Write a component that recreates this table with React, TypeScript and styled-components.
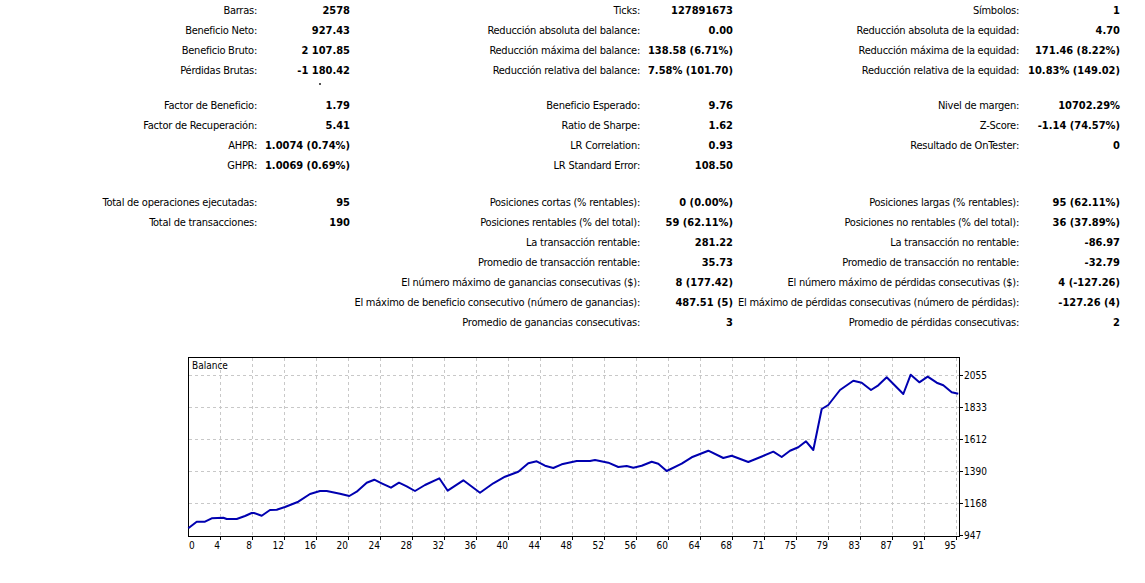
import React from "react";
import styled, { createGlobalStyle } from "styled-components";

const GlobalStyle = createGlobalStyle`
  html, body { margin: 0; padding: 0; background: #ffffff; }
  body {
    font-family: Tahoma, "DejaVu Sans Condensed", "DejaVu Sans", sans-serif;
    font-size: 11px;
    color: #000000;
  }
`;

const Page = styled.div`
  width: 1145px;
  height: 583px;
  overflow: hidden;
  background: #ffffff;
`;

const StatsGrid = styled.div`
  display: grid;
  grid-template-columns: 264px 86px 298px 85px 294px 93px;
  grid-auto-rows: auto;
`;

const Label = styled.div<{ $pad: number }>`
  display: flex;
  align-items: center;
  justify-content: flex-end;
  height: 20px;
  white-space: nowrap;
  padding-right: ${(p) => p.$pad}px;
  font-stretch: condensed;
  letter-spacing: -0.25px;
  color: #000;
`;

const Value = styled.div`
  display: flex;
  align-items: center;
  justify-content: flex-end;
  height: 20px;
  white-space: nowrap;
  font-weight: bold;
  font-stretch: condensed;
  color: #000;
`;

const Spacer = styled.div<{ $h: number }>`
  grid-column: 1 / -1;
  height: ${(p) => p.$h}px;
`;

const Dot = styled.div`
  width: 2px;
  height: 2px;
  margin: 3px 0 0 319px;
  background: #555;
`;

const ChartWrap = styled.div`
  margin: 18px 0 0 180px;
  width: 820px;
  height: 206px;
`;

type Pair = [string, string] | null;
type Row = [Pair, Pair, Pair];

const section1: Row[] = [
  [["Barras:", "2578"], ["Ticks:", "127891673"], ["Símbolos:", "1"]],
  [["Beneficio Neto:", "927.43"], ["Reducción absoluta del balance:", "0.00"], ["Reducción absoluta de la equidad:", "4.70"]],
  [["Beneficio Bruto:", "2 107.85"], ["Reducción máxima del balance:", "138.58 (6.71%)"], ["Reducción máxima de la equidad:", "171.46 (8.22%)"]],
  [["Pérdidas Brutas:", "-1 180.42"], ["Reducción relativa del balance:", "7.58% (101.70)"], ["Reducción relativa de la equidad:", "10.83% (149.02)"]],
];

const section2: Row[] = [
  [["Factor de Beneficio:", "1.79"], ["Beneficio Esperado:", "9.76"], ["Nivel de margen:", "10702.29%"]],
  [["Factor de Recuperación:", "5.41"], ["Ratio de Sharpe:", "1.62"], ["Z-Score:", "-1.14 (74.57%)"]],
  [["AHPR:", "1.0074 (0.74%)"], ["LR Correlation:", "0.93"], ["Resultado de OnTester:", "0"]],
  [["GHPR:", "1.0069 (0.69%)"], ["LR Standard Error:", "108.50"], null],
];

const section3: Row[] = [
  [["Total de operaciones ejecutadas:", "95"], ["Posiciones cortas (% rentables):", "0 (0.00%)"], ["Posiciones largas (% rentables):", "95 (62.11%)"]],
  [["Total de transacciones:", "190"], ["Posiciones rentables (% del total):", "59 (62.11%)"], ["Posiciones no rentables (% del total):", "36 (37.89%)"]],
  [null, ["La transacción rentable:", "281.22"], ["La transacción no rentable:", "-86.97"]],
  [null, ["Promedio de transacción rentable:", "35.73"], ["Promedio de transacción no rentable:", "-32.79"]],
  [null, ["El número máximo de ganancias consecutivas ($):", "8 (177.42)"], ["El número máximo de pérdidas consecutivas ($):", "4 (-127.26)"]],
  [null, ["El máximo de beneficio consecutivo (número de ganancias):", "487.51 (5)"], ["El máximo de pérdidas consecutivas (número de pérdidas):", "-127.26 (4)"]],
  [null, ["Promedio de ganancias consecutivas:", "3"], ["Promedio de pérdidas consecutivas:", "2"]],
];

const pads = [7, 8, 8];

function renderRows(rows: Row[], key: string) {
  return rows.map((row, ri) =>
    row.map((pair, ci) => (
      <React.Fragment key={`${key}-${ri}-${ci}`}>
        <Label $pad={pads[ci]}>{pair ? pair[0] : ""}</Label>
        <Value>{pair ? pair[1] : ""}</Value>
      </React.Fragment>
    ))
  );
}

const curve =
  "188.3,528.3 196.7,521.7 205,521.7 211.7,518.3 223.3,517.7 226.7,519 236.7,519 245,516 251.7,513 254,513 261.7,515.7 270,510 276.7,509.7 285,507 298.3,501.7 310,494 320,491 326.7,491 340,493.7 349.3,496 356.7,491.7 366.7,482.7 374.3,479.7 381.7,483.3 391,487.7 399,482.7 406.7,486.3 415,491 425,485 439.3,478.3 447.7,490.7 463.3,480.3 480,492.7 493.3,483.3 505,476.7 518.3,471.7 528.3,463.3 536.7,461.3 545,465.7 553.3,468 561.7,464.3 576.7,461 590,461 595,460 608.3,462.7 618.3,467 626.7,466 633.3,467.7 641.7,465.7 651.7,461.7 658.3,463.7 666.7,471 681.7,463.7 691.7,457.3 708.3,450.7 723.3,458 731.7,455.7 748.3,462 760,457.3 773.3,451.7 781.7,457 790,450.7 798.3,447.3 806,441.3 813.3,450 821.7,409 828.3,405 840,390 853.3,380.7 861.7,382.7 871,390 878.3,385.3 886.7,377.3 903.3,394 910.7,374.7 919.3,382.3 927.7,376.7 936.7,382.7 943.3,385.3 951.7,392.3 958.3,393.7";

const xLabels = ["4", "8", "12", "16", "20", "24", "28", "32", "36", "40", "44", "48", "52", "56", "60", "64", "68", "71", "75", "79", "83", "87", "91", "95"];
const yLabels: [string, number][] = [
  ["2055", 375],
  ["1833", 407],
  ["1612", 439],
  ["1390", 471],
  ["1168", 503],
  ["947", 535],
];

const axisFont = 'Tahoma, "DejaVu Sans Condensed", "DejaVu Sans", sans-serif';

function BalanceChart() {
  return (
    <svg width="820" height="206" viewBox="180 350 820 206">
      <rect x="180" y="350" width="820" height="206" fill="#fff" />
      <g stroke="#c8c8c8" strokeWidth="1" strokeDasharray="3 3" fill="none">
        {xLabels.map((_, k) => {
          const x = 220 + 32 * k + 0.5;
          return <line key={`v${k}`} x1={x} y1={358} x2={x} y2={536} />;
        })}
        {yLabels.slice(0, 5).map(([, y]) => (
          <line key={`h${y}`} x1={189} y1={y + 0.5} x2={959} y2={y + 0.5} />
        ))}
      </g>
      <rect x="188.5" y="357.5" width="771" height="179" fill="none" stroke="#000" strokeWidth="1" />
      <g stroke="#000" strokeWidth="1">
        {xLabels.map((_, k) => {
          const x = 220 + 32 * k + 0.5;
          return <line key={`tx${k}`} x1={x} y1={537} x2={x} y2={540} />;
        })}
        {yLabels.map(([, y]) => (
          <line key={`ty${y}`} x1={960} y1={y + 0.5} x2={963} y2={y + 0.5} />
        ))}
      </g>
      <polyline points={curve} fill="none" stroke="#0000b0" strokeWidth="2" strokeLinejoin="round" />
      <text x="192" y="369" fontSize="10" fontFamily={axisFont} fill="#000">
        Balance
      </text>
      <text x="189" y="549" fontSize="10" fontFamily={axisFont} fill="#000">
        0
      </text>
      {xLabels.map((t, k) => (
        <text key={`xl${k}`} x={220 + 32 * k} y={549} fontSize="10" fontFamily={axisFont} fill="#000" textAnchor="end">
          {t}
        </text>
      ))}
      {yLabels.map(([t, y]) => (
        <text key={`yl${t}`} x={964} y={y + 4} fontSize="10" fontFamily={axisFont} fill="#000">
          {t}
        </text>
      ))}
    </svg>
  );
}

export default function App() {
  return (
    <Page>
      <GlobalStyle />
      <StatsGrid>
        {renderRows(section1, "s1")}
        <Spacer $h={15}>
          <Dot />
        </Spacer>
        {renderRows(section2, "s2")}
        <Spacer $h={17} />
        {renderRows(section3, "s3")}
      </StatsGrid>
      <ChartWrap>
        <BalanceChart />
      </ChartWrap>
    </Page>
  );
}
